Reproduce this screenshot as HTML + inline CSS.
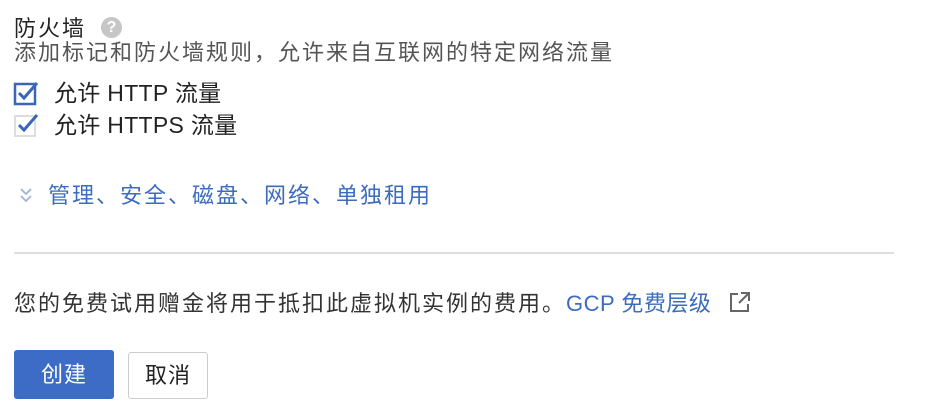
<!DOCTYPE html>
<html><head><meta charset="utf-8"><style>
body{margin:0;width:948px;height:408px;background:#fff;font-family:"Liberation Sans","Noto Sans CJK SC",sans-serif;position:relative;overflow:hidden}
.t{position:absolute;white-space:nowrap;font-size:22px;letter-spacing:2px;line-height:26px}
</style></head><body>
<div class="t" style="left:14px;top:16px;color:#222">防火墙</div>
<div style="position:absolute;left:101px;top:17px;width:21px;height:21px;border-radius:50%;background:#c6c6c6;color:#fff;font:bold 16px/21px 'Liberation Sans',sans-serif;text-align:center">?</div>
<div class="t" style="left:14px;top:40px;color:#555">添加标记和防火墙规则，允许来自互联网的特定网络流量</div>
<svg style="position:absolute;left:13px;top:79px" width="28" height="28"><rect x="2" y="5" width="20" height="20" fill="none" stroke="#3b66b8" stroke-width="2.5"/><path d="M6 14 L11 19 L24 4" fill="none" stroke="#3b66b8" stroke-width="3"/></svg>
<div class="t" style="left:54px;top:80px;color:#222;font-size:23px;letter-spacing:0.3px">允许 HTTP 流量</div>
<svg style="position:absolute;left:13px;top:111px" width="28" height="28"><rect x="2" y="5" width="20" height="20" fill="none" stroke="#ddd" stroke-width="2"/><path d="M6 14 L11 19 L24 4" fill="none" stroke="#3b66b8" stroke-width="3"/></svg>
<div class="t" style="left:54px;top:112px;color:#222;font-size:23px;letter-spacing:0.3px">允许 HTTPS 流量</div>
<svg style="position:absolute;left:18px;top:185px" width="16" height="20"><path d="M3 4 L8 9 L13 4 M3 11 L8 16 L13 11" fill="none" stroke="#9fb2d6" stroke-width="1.8"/></svg>
<div class="t" style="left:48px;top:183px;color:#3b6cc0">管理、安全、磁盘、网络、单独租用</div>
<div style="position:absolute;left:14px;top:252px;width:880px;height:2px;background:#ddd"></div>
<div class="t" style="left:14px;top:291px;color:#333">您的免费试用赠金将用于抵扣此虚拟机实例的费用。<span style="color:#3b6cc0;letter-spacing:0.5px">GCP 免费层级</span></div>
<svg style="position:absolute;left:728px;top:290px" width="24" height="24"><path d="M10 4 H3 V21 H20 V14 M13 3 H21 V11 M21 3 L11 13" fill="none" stroke="#666" stroke-width="2"/></svg>
<div style="position:absolute;left:14px;top:350px;width:100px;height:49px;background:#3d6cc6;border-radius:3px;color:#fff;font-size:22px;line-height:49px;text-align:center;letter-spacing:1px">创建</div>
<div style="position:absolute;left:128px;top:352px;width:78px;height:45px;border:1px solid #ccc;border-radius:3px;color:#222;font-size:22px;line-height:45px;text-align:center;letter-spacing:1px">取消</div>
</body></html>
